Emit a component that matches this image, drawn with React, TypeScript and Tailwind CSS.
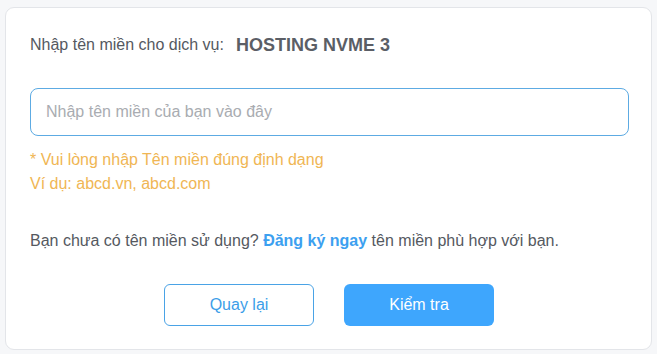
import { useState } from 'react';

export default function App() {
  const [domain, setDomain] = useState('');

  return (
    <div className="w-[657px] h-[354px] bg-[#f6f7f9] pt-[7px] pl-[5px] font-['Liberation_Sans',Arial,sans-serif]">
      <div className="w-[647px] h-[343px] bg-white border border-[#e3e5e9] rounded-[9px] pl-[24px] pr-[23px] pt-[25px]">
        {/* Title */}
        <div className="flex items-center h-[24px]">
          <span className="text-[16px] text-[#55595f]">Nhập tên miền cho dịch vụ:</span>
          <span className="ml-[12px] text-[18px] font-bold text-[#5b5e66]">HOSTING NVME 3</span>
        </div>

        {/* Domain input */}
        <input
          value={domain}
          onChange={e => setDomain(e.target.value)}
          placeholder="Nhập tên miền của bạn vào đây"
          className="mt-[31px] block w-[599px] h-[48px] rounded-[8px] border border-[#5dabe3] px-[15px] text-[16px] text-[#55595f] placeholder:text-[#a9acb1] outline-none"
        />

        {/* Hint */}
        <div className="mt-[12px] text-[16px] leading-[24px] text-[#f0b654]">
          <div>* Vui lòng nhập Tên miền đúng định dạng</div>
          <div>Ví dụ: abcd.vn, abcd.com</div>
        </div>

        <p className="mt-[33px] text-[16px] leading-[24px] text-[#55595f]">
          Bạn chưa có tên miền sử dụng?{' '}
          <a href="#" className="font-bold text-[#3ca0f0]">Đăng ký ngay</a>{' '}
          tên miền phù hợp với bạn.
        </p>

        {/* Actions */}
        <div className="mt-[31px] flex gap-[30px] pl-[134px]">
          <button className="w-[150px] h-[42px] rounded-[6px] border border-[#4aa3e6] bg-white text-[16px] text-[#3c9ee8]">
            Quay lại
          </button>
          <button className="w-[150px] h-[42px] rounded-[6px] bg-[#3ea6fd] text-[16px] text-white">
            Kiểm tra
          </button>
        </div>
      </div>
    </div>
  );
}
